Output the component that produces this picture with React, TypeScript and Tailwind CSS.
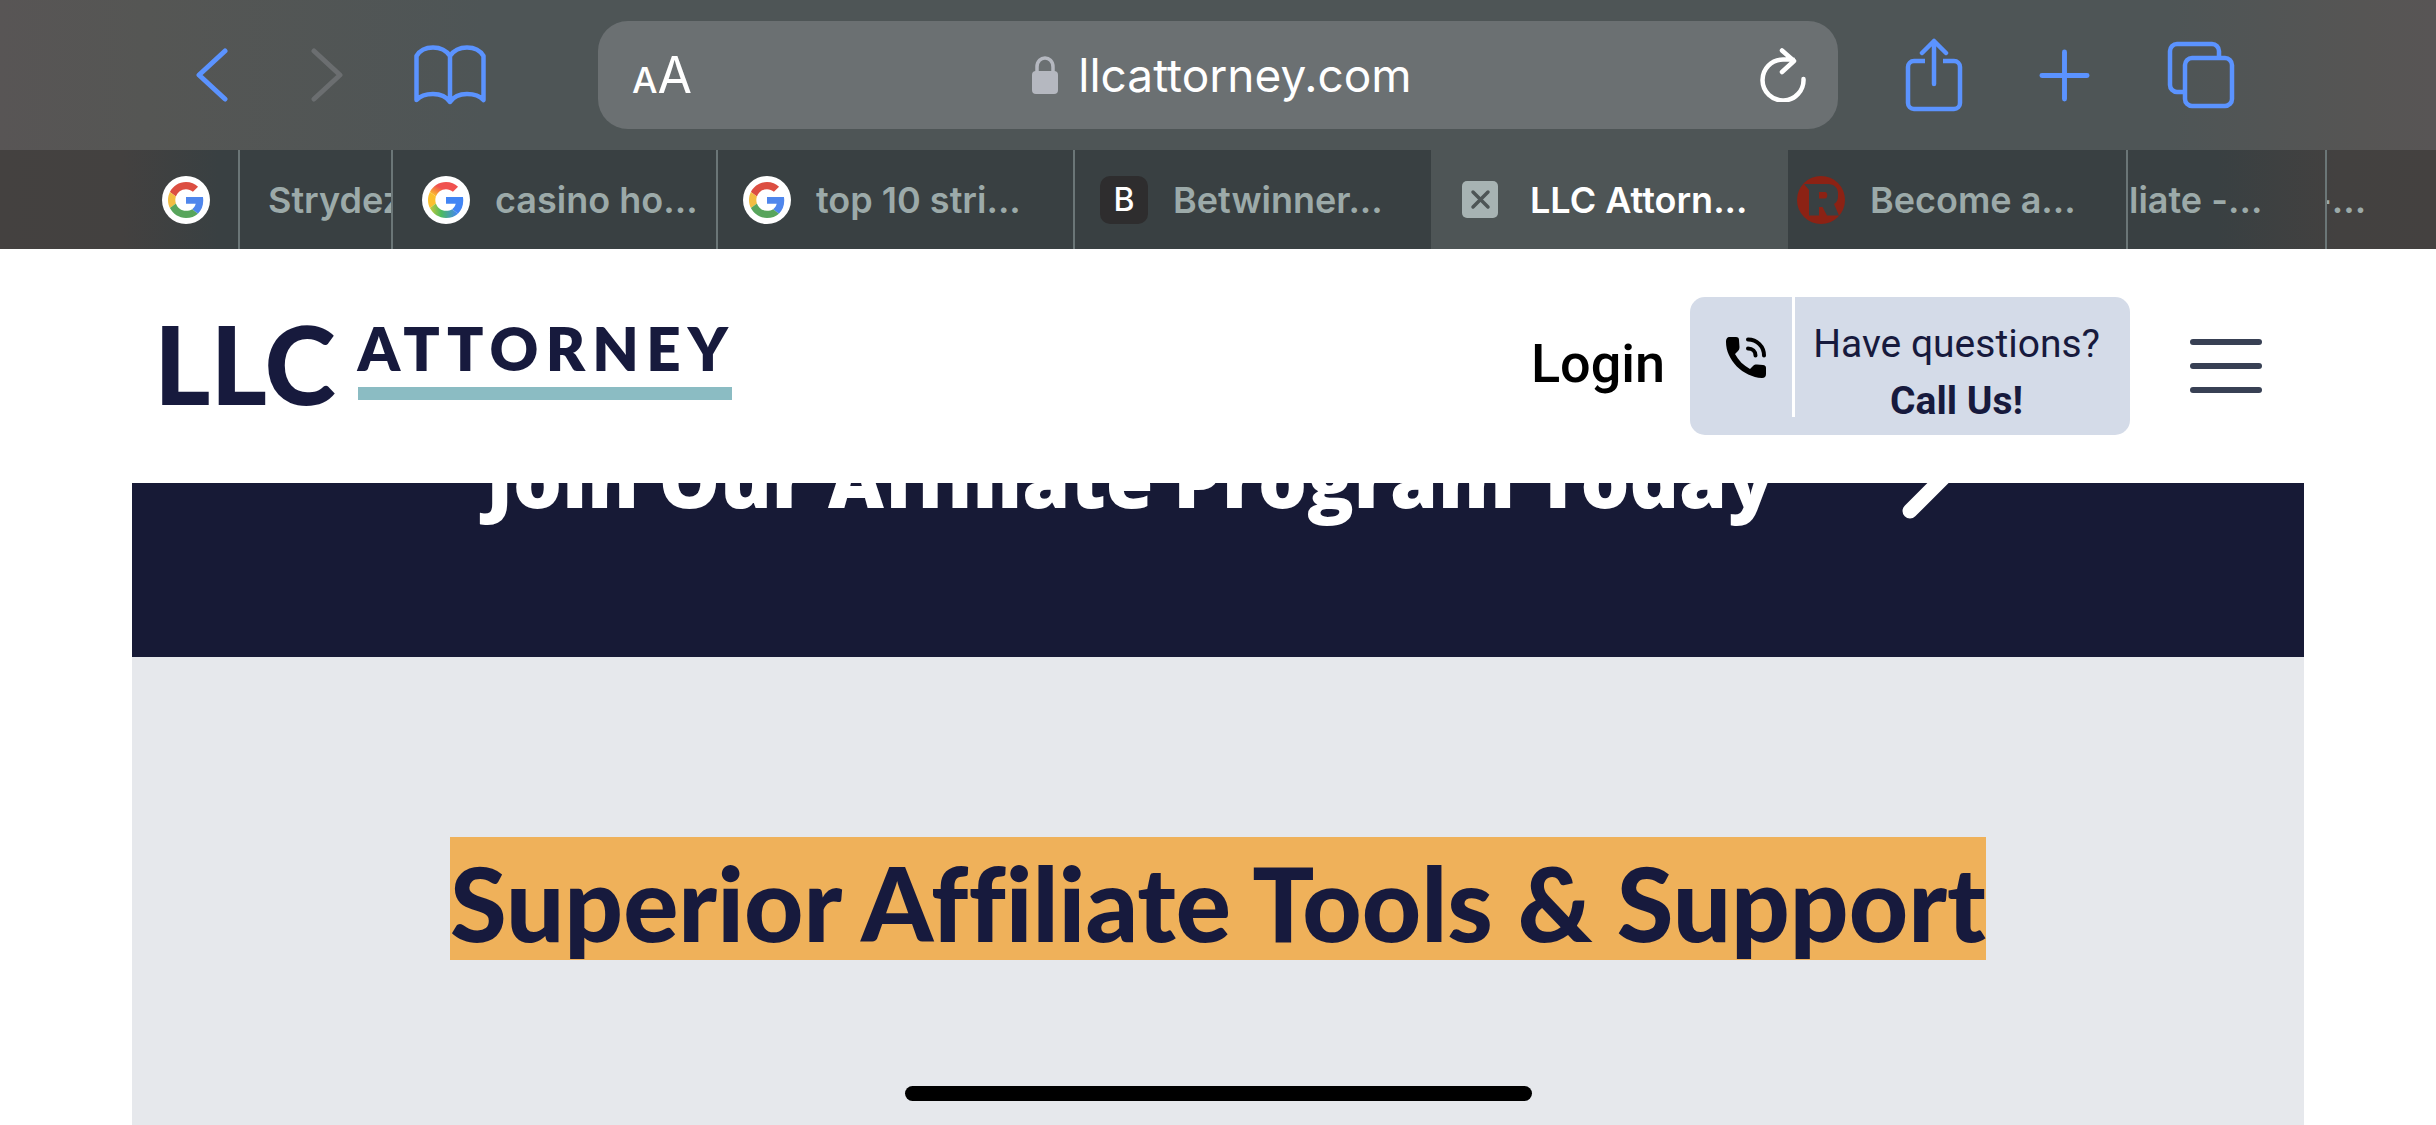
import { useState } from "react";

const stroke = {
  fill: "none",
  stroke: "currentColor",
  strokeLinecap: "round" as const,
  strokeLinejoin: "round" as const,
};

function GoogleIcon({ blended = false }: { blended?: boolean }) {
  return (
    <span
      className="grid size-12 shrink-0 place-items-center rounded-full bg-white"
      aria-hidden="true"
    >
      <svg viewBox="0 0 48 48" className="size-9">
        <defs>
          <linearGradient id="warm" x1="0" y1="1" x2="1" y2="0">
            <stop offset="0.1" stopColor="#FBC02D" />
            <stop offset="0.5" stopColor="#F0524F" />
          </linearGradient>
          <linearGradient id="leaf" x1="0" y1="0" x2="1" y2="0">
            <stop offset="0" stopColor="#C6C93A" />
            <stop offset="0.4" stopColor="#4DBB5F" />
            <stop offset="1" stopColor="#4285F4" />
          </linearGradient>
        </defs>
        <path fill={blended ? "url(#warm)" : "#DC4E41"} d="M24 9.5c3.54 0 6.71 1.22 9.21 3.6l6.85-6.85C35.9 2.38 30.47 0 24 0 14.62 0 6.51 5.38 2.56 13.22l7.98 6.19C12.43 13.72 17.74 9.5 24 9.5z" />
        <path fill={blended ? "#4285F4" : "#4F86EC"} d="M46.98 24.55c0-1.57-.15-3.09-.38-4.55H24v9.02h12.94c-.58 2.96-2.26 5.48-4.78 7.18l7.73 6c4.51-4.18 7.09-10.36 7.09-17.65z" />
        <path fill={blended ? "#FBC02D" : "#F2BD42"} d="M10.53 28.59c-.48-1.45-.76-2.99-.76-4.59s.27-3.14.76-4.59l-7.98-6.19C.92 16.46 0 20.12 0 24c0 3.88.92 7.54 2.56 10.78l7.97-6.19z" />
        <path fill={blended ? "url(#leaf)" : "#58A55C"} d="M24 48c6.48 0 11.93-2.13 15.89-5.81l-7.73-6c-2.15 1.45-4.92 2.3-8.16 2.3-6.26 0-11.57-4.22-13.47-9.91l-7.98 6.19C6.51 42.62 14.62 48 24 48z" />
      </svg>
    </span>
  );
}

function Toolbar() {
  return (
    <div className="flex h-[150px] items-center bg-[linear-gradient(to_right,#585555_0%,#555654_6%,#4e5556_20%,#4e5556_89%,#565554_97%,#585555_100%)] pr-[201px] pl-[196px]">
      <div className="flex w-[402px] shrink-0 items-center text-[#5b93ff]">
        <button type="button" aria-label="Back">
          <svg viewBox="0 0 32 54" className="h-[54px] w-8" strokeWidth="5" {...stroke}>
            <path d="M29 3 3 27l26 24" />
          </svg>
        </button>
        <button type="button" aria-label="Forward" className="ml-[83px] text-[#6b6e70]">
          <svg viewBox="0 0 32 54" className="h-[54px] w-8" strokeWidth="5" {...stroke}>
            <path d="m3 3 26 24L3 51" />
          </svg>
        </button>
        <button type="button" aria-label="Bookmarks" className="ml-[71px]">
          <svg viewBox="0 0 72 60" className="h-[60px] w-[72px]" strokeWidth="4.5" {...stroke}>
            <path d="M36 11C32 5 26 2.500 19 2.500S6 5 2.500 11v44C6 51 12 49 19 49s13 2 17 8c4-6 10-8 17-8s13 2 16.500 6V11C66 5 60 2.500 53 2.500S40 5 36 11v46" />
          </svg>
        </button>
      </div>
      <div className="flex h-[108px] min-w-0 grow items-center rounded-[30px] bg-[#6b7072] pr-8 pl-[34px] text-white">
        <button type="button" aria-label="Page settings" className="w-[60px] text-left leading-none">
          <span className="text-[36px] font-medium">A</span>
          <span className="text-[50px]">A</span>
        </button>
        <div className="flex grow items-center justify-center gap-5 pr-2">
          <svg viewBox="0 0 26 38" className="h-[38px] w-[26px] text-[#b5b8c0]" aria-hidden="true">
            <rect y="15" width="26" height="23" rx="4" fill="currentColor" />
            <path d="M5 17v-6c0-12 16-12 16 0v6" fill="none" stroke="currentColor" strokeWidth="3.500" />
          </svg>
          <span className="text-[46px] leading-none">llcattorney.com</span>
        </div>
        <button type="button" aria-label="Reload">
          <svg viewBox="0 0 46 54" className="h-[54px] w-[46px]" strokeWidth="4.500" {...stroke}>
            <path d="M43.500 31A20.500 20.500 0 1 1 23 11.500h10M22 2.500l12 10.500L22 24" />
          </svg>
        </button>
      </div>
      <div className="flex shrink-0 items-center pl-[67px] text-[#5b93ff]">
        <button type="button" aria-label="Share">
          <svg viewBox="0 0 58 74" className="h-[74px] w-[58px]" strokeWidth="4.500" {...stroke}>
            <path strokeLinecap="butt" d="M20 23H9a6 6 0 0 0-6 6v36a6 6 0 0 0 6 6h40a6 6 0 0 0 6-6V29a6 6 0 0 0-6-6H38" />
            <path d="M29 46V3M17 15 29 3l12 12" />
          </svg>
        </button>
        <button type="button" aria-label="New tab" className="ml-[75px]">
          <svg viewBox="0 0 52 54" className="size-[53px]" strokeWidth="5" {...stroke}>
            <path d="M26 3v48M3 27h46" />
          </svg>
        </button>
        <button type="button" aria-label="Tab overview" className="ml-[76px]">
          <svg viewBox="0 0 68 68" className="size-[68px]" strokeWidth="4.500" {...stroke}>
            <path strokeLinecap="butt" d="M16 51h-6a7 7 0 0 1-7-7V10a7 7 0 0 1 7-7h35a7 7 0 0 1 7 7v6" />
            <rect x="18" y="17" width="47" height="48" rx="7" />
          </svg>
        </button>
      </div>
    </div>
  );
}

function TabStrip() {
  return (
    <nav
      aria-label="Open tabs"
      className="flex h-[99px] items-stretch bg-[linear-gradient(to_right,#444140_0%,#434140_5%,#394042_9%,#394042_91%,#434140_96%,#444140_100%)] text-[36px] font-semibold whitespace-nowrap text-[#9caaa9] *:flex *:shrink-0 *:items-center *:overflow-hidden"
    >
      <button type="button" aria-label="Google" className="w-[240px] border-r-2 border-[#6b7677] pl-[162px]">
        <GoogleIcon />
      </button>
      <button type="button" className="w-[153px] border-r-2 border-[#6b7677] pl-7">Strydez</button>
      <button type="button" className="w-[325px] gap-[25px] border-r-2 border-[#6b7677] pl-[29px]">
        <GoogleIcon blended />
        casino ho...
      </button>
      <button type="button" className="w-[357px] gap-[25px] border-r-2 border-[#6b7677] pl-[25px]">
        <GoogleIcon />
        top 10 stri...
      </button>
      <button type="button" className="w-[356px] gap-[25px] pl-[25px]">
        <span className="grid size-12 place-items-center rounded-[10px] bg-[#2e2d2e] text-[32px] font-medium text-white">B</span>
        Betwinner...
      </button>
      <div className="w-[357px] gap-8 bg-[#4e5556] pl-[31px] text-white">
        <button type="button" aria-label="Close tab" className="text-[#4e5556]">
          <svg viewBox="0 0 36 37" className="h-[37px] w-9">
            <rect width="36" height="37" rx="5" fill="#a7b3b3" />
            <path d="m11 11 15 15m0-15L11 26" stroke="currentColor" strokeWidth="3.500" strokeLinecap="round" />
          </svg>
        </button>
        <span aria-current="page">LLC Attorn...</span>
      </div>
      <button type="button" className="w-[340px] gap-[25px] border-r-2 border-[#6b7677] pl-[9px]">
        <svg viewBox="0 0 48 48" className="size-12 shrink-0" aria-hidden="true">
          <circle cx="24" cy="24" r="24" fill="#8c2214" />
          <path d="M7 8h24c6 0 10 4 10 9v3c0 4-1 6-4 8l5 11.500H30L25.500 31H22v8.500H12V14z" fill="#394042" />
          <path d="M22 16h6c3 0 3 6.500 0 6.500h-6z" fill="#8c2214" />
        </svg>
        Become a...
      </button>
      <button type="button" className="w-[199px] border-r-2 border-[#6b7677] pl-px">liate -...</button>
      <button type="button" className="w-[110px] justify-start">
        <span className="-ml-3">-...</span>
      </button>
    </nav>
  );
}

function SiteHeader() {
  const [open, setOpen] = useState(false);
  return (
    <header className="flex h-[234px] items-center bg-white pr-[174px] pl-[154px] font-[Roboto,sans-serif]">
      <a href="#home" aria-label="LLC Attorney" className="flex items-start gap-[22px] pb-[7px] font-[Lato,sans-serif] text-[#171a3d]">
        <span className="text-[108px] leading-[92px] font-black">LLC</span>
        <span className="flex w-[374px] flex-col border-b-[13px] border-[#8bbcc3] pb-2 text-[60px] leading-[62px] font-extrabold tracking-[0.120em]">
          ATTORNEY
        </span>
      </a>
      <a href="#login" className="ml-auto pb-1 text-[54px] leading-none font-medium text-black">Login</a>
      <a
        href="#call"
        className="ml-[25px] flex h-[138px] items-start rounded-[15px] bg-[#d4dbe8] pr-[30px] text-[#171a3d]"
      >
        <span className="flex h-[120px] w-[105px] items-center justify-center border-r-3 border-white pl-2.5">
          <svg viewBox="0 0 40 41" className="h-[41px] w-10 text-black" fill="currentColor" aria-hidden="true">
            <path d="M4 0h6c2 0 3 1 3 3l.5 7c0 2-.5 3-2 4.500L9 17c3.500 6.500 8.500 11.500 15 15l3-3c1.200-1.200 2.500-1.600 4-1.500l6 .500c2 .200 3 1.300 3 3v6c0 2.500-1.300 4-4 4C17 40 0 23 0 5c0-3 1-5 4-5z" />
            <path d="M22 2.500c9 0 16 7 16 16M22 11.500c4.500 0 7.500 3 7.500 7" fill="none" stroke="currentColor" strokeWidth="4" strokeLinecap="round" />
          </svg>
        </span>
        <span className="flex flex-col pt-[19px] pl-[18px] text-center text-[39px] leading-[57px]">
          Have questions?
          <strong className="font-bold">Call Us!</strong>
        </span>
      </a>
      <button
        type="button"
        aria-label="Menu"
        aria-expanded={open}
        onClick={() => setOpen(!open)}
        className="ml-[60px] flex w-[72px] flex-col gap-[18px] *:h-1.5 *:rounded-full *:bg-[#384054]"
      >
        <span />
        <span />
        <span />
      </button>
    </header>
  );
}

export default function App() {
  return (
    <div className="flex min-h-screen flex-col overflow-hidden bg-white font-[Inter,sans-serif]">
      <Toolbar />
      <TabStrip />
      <SiteHeader />
      <main className="mx-[132px] flex grow flex-col bg-[#e6e8ec]">
        <a
          href="#join"
          className="flex h-[174px] items-start justify-center gap-32 overflow-hidden bg-[#171a36] pl-3 font-['Open_Sans',sans-serif] text-[77px] leading-[84px] font-extrabold text-white"
        >
          <span className="-mt-[46px]">Join Our Affiliate Program Today</span>
          <svg viewBox="0 0 60 100" className="-mt-16 h-[100px] w-[60px]" strokeWidth="15" {...stroke}>
            <path d="m8 8 42 42L8 92" />
          </svg>
        </a>
        <section className="flex grow flex-col items-center pt-[180px] font-[Lato,sans-serif]">
          <h2 className="bg-[#efb15a] pt-2 text-[103px] leading-[115px] font-black whitespace-nowrap text-[#171a3d] [font-variant-ligatures:none]">
            Superior Affiliate Tools &amp; Support
          </h2>
          <div className="mt-auto mb-6 h-[15px] w-[627px] rounded-full bg-black" />
        </section>
      </main>
    </div>
  );
}
